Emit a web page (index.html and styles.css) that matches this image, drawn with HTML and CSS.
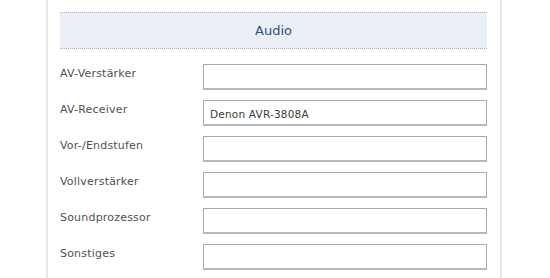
FILE: index.html
```html
<!DOCTYPE html>
<html lang="de">

<head>
  <meta charset="UTF-8">
  <title>Audio</title>
  <link rel="stylesheet" href="styles.css">
</head>

<body>
  <div class="panel">
    <h2 class="section-title">Audio</h2>

    <form class="fields">
      <label for="av-verstaerker">AV-Verstärker</label>
      <input id="av-verstaerker" type="text">

      <label for="av-receiver">AV-Receiver</label>
      <input id="av-receiver" type="text" value="Denon AVR-3808A">

      <label for="endstufen">Vor-/Endstufen</label>
      <input id="endstufen" type="text">

      <label for="vollverstaerker">Vollverstärker</label>
      <input id="vollverstaerker" type="text">

      <label for="soundprozessor">Soundprozessor</label>
      <input id="soundprozessor" type="text">

      <label for="sonstiges">Sonstiges</label>
      <input id="sonstiges" type="text">
    </form>
  </div>
</body>

</html>
```

FILE: styles.css
```css
* {
  margin: 0;
  padding: 0;
  box-sizing: border-box;
}

body {
  background-color: #fff;
  font-family: 'DejaVu Sans', Verdana, sans-serif;
  color: #444;
}

.panel {
  width: 456px;
  min-height: 278px;
  margin-left: 46px;
  padding: 12px 13px 0 12px;
  border-left: 2px solid #e6e6e6;
  border-right: 2px solid #e6e6e6;
}

.section-title {
  height: 37px;
  display: flex;
  align-items: center;
  justify-content: center;
  background-color: #eaf0f5;
  border-top: 1px dotted #a9b0b8;
  border-bottom: 1px dotted #a9b0b8;
  color: #2e4f82;
  font-size: 13px;
  font-weight: normal;
}

.fields {
  display: grid;
  grid-template-columns: 143px 284px;
  row-gap: 10px;
  margin-top: 15px;
}

.fields label {
  font-size: 11px;
  letter-spacing: 0.2px;
  color: #505050;
  padding-top: 3px;
}

.fields input {
  height: 26px;
  border: 1px solid #a3abb3;
  border-bottom: 2px solid #b4bac0;
  padding: 2px 6px 0;
  font-family: 'DejaVu Sans', Verdana, sans-serif;
  font-size: 10.5px;
  letter-spacing: 0.2px;
  color: #3a3a3a;
  outline: none;
}
```
